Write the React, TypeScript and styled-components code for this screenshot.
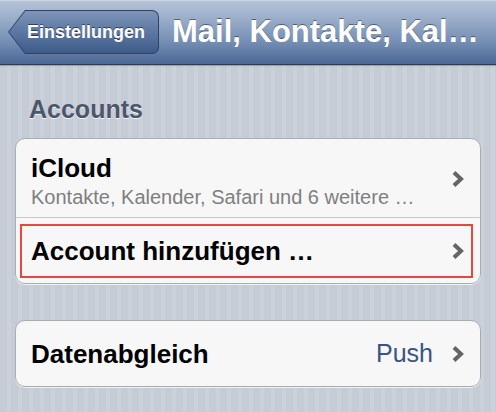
import React from "react";
import styled, { createGlobalStyle } from "styled-components";

const Global = createGlobalStyle`
  html, body {
    margin: 0;
    padding: 0;
    min-height: 100%;
  }
  body {
    min-height: 100vh;
    font-family: "Liberation Sans", Arial, Helvetica, sans-serif;
    background-color: #c7cdd6;
    background-image: repeating-linear-gradient(
      90deg,
      #c6ccd5 0px,
      #c6ccd5 7px,
      #cbd1d9 7px,
      #cbd1d9 11px
    );
  }
`;

const Screen = styled.div`
  display: flex;
  flex-direction: column;
  width: 496px;
`;

const NavBar = styled.header`
  display: flex;
  align-items: center;
  gap: 13px;
  height: 64px;
  padding-left: 8px;
  background: linear-gradient(
    to bottom,
    #b6c4d8 0%,
    #9aadc9 30%,
    #7891b6 62%,
    #4c6896 100%
  );
  border-bottom: 1px solid #2b3a55;
  box-shadow: inset 0 1px 0 #cdd6e3, 0 1px 1px rgba(0, 0, 0, 0.2);
  overflow: hidden;
`;

const BackButton = styled.button`
  position: relative;
  flex: none;
  height: 44px;
  padding: 0 14px 0 19px;
  border: 0;
  background: transparent;
  font-family: "Liberation Sans", Arial, sans-serif;
  font-size: 18px;
  font-weight: bold;
  color: #fff;
  text-shadow: 0 -1px 0 rgba(0, 0, 0, 0.5);
  cursor: pointer;

  &::before {
    content: "";
    position: absolute;
    inset: 0;
    background: #2e4265;
    border-radius: 0 7px 7px 0;
    clip-path: polygon(17px 0, 100% 0, 100% 100%, 17px 100%, 0 50%);
  }

  &::after {
    content: "";
    position: absolute;
    inset: 1px;
    background: linear-gradient(to bottom, #7e95b8 0%, #5f7aa3 45%, #3e5b8a 100%);
    border-radius: 0 6px 6px 0;
    clip-path: polygon(16.4px 0, 100% 0, 100% 100%, 16.4px 100%, 0 50%);
  }
`;

const BackLabel = styled.span`
  position: relative;
  z-index: 1;
`;

const Title = styled.h1`
  margin: 0;
  flex: 1;
  min-width: 0;
  white-space: nowrap;
  overflow: hidden;
  font-size: 31px;
  font-weight: bold;
  color: #fff;
  text-shadow: 0 -1px 0 rgba(0, 0, 0, 0.45);
`;

const Content = styled.main`
  display: flex;
  flex-direction: column;
  padding: 0 15px;
`;

const SectionHeader = styled.h2`
  margin: 29px 0 14px;
  padding-left: 14px;
  font-size: 25px;
  line-height: 30px;
  font-weight: bold;
  color: #4c566c;
  text-shadow: 0 1px 0 rgba(255, 255, 255, 0.8);
`;

const Card = styled.section<{ $gap?: number }>`
  display: flex;
  flex-direction: column;
  margin-top: ${(p) => p.$gap ?? 0}px;
  background: #f7f7f7;
  border: 1px solid #a9acb1;
  border-radius: 10px;
  box-shadow: 0 1px 0 rgba(255, 255, 255, 0.7);
  overflow: hidden;
`;

const Row = styled.div<{ $h: number; $sep?: boolean }>`
  position: relative;
  display: flex;
  align-items: center;
  height: ${(p) => p.$h}px;
  padding: 0 16px 0 15px;
  border-bottom: ${(p) => (p.$sep ? "1px solid #c9c9c9" : "0")};
`;

const TwoLine = styled.div`
  display: flex;
  flex-direction: column;
  align-self: flex-start;
  padding-top: 14px;
  flex: 1;
  min-width: 0;
`;

const Label = styled.span`
  flex: 1;
  font-size: 26px;
  line-height: 30px;
  font-weight: bold;
  color: #000;
  white-space: nowrap;
`;

const Sub = styled.span`
  margin-top: 2px;
  font-size: 20px;
  line-height: 24px;
  color: #7f7f7f;
  white-space: nowrap;
`;

const Value = styled.span`
  margin-right: 19px;
  font-size: 25px;
  color: #385487;
`;

const ChevronBox = styled.span<{ $offset?: number }>`
  display: flex;
  flex: none;
  width: 12px;
  height: 18px;
  margin-top: ${(p) => p.$offset ?? 0}px;
`;

const Highlight = styled.div`
  position: absolute;
  top: 6px;
  bottom: 5px;
  left: 4px;
  right: 7px;
  border: 2px solid #e8473d;
  pointer-events: none;
`;

const Chevron = ({ offset }: { offset?: number }) => (
  <ChevronBox $offset={offset}>
    <svg width="12" height="18" viewBox="0 0 12 18">
      <polyline
        points="2,2.5 9,9 2,15.5"
        fill="none"
        stroke="#646464"
        strokeWidth="4"
        strokeLinejoin="miter"
      />
    </svg>
  </ChevronBox>
);

export default function App() {
  return (
    <>
      <Global />
      <Screen>
        <NavBar>
          <BackButton>
            <BackLabel>Einstellungen</BackLabel>
          </BackButton>
          <Title>Mail, Kontakte, Kal…</Title>
        </NavBar>
        <Content>
          <SectionHeader>Accounts</SectionHeader>
          <Card>
            <Row $h={78} $sep>
              <TwoLine>
                <Label>iCloud</Label>
                <Sub>Kontakte, Kalender, Safari und 6 weitere …</Sub>
              </TwoLine>
              <Chevron offset={2} />
            </Row>
            <Row $h={65}>
              <Label>Account hinzufügen …</Label>
              <Chevron />
              <Highlight />
            </Row>
          </Card>
          <Card $gap={36}>
            <Row $h={65}>
              <Label>Datenabgleich</Label>
              <Value>Push</Value>
              <Chevron />
            </Row>
          </Card>
        </Content>
      </Screen>
    </>
  );
}
